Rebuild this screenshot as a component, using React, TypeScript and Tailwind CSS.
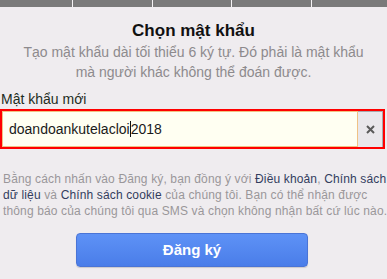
import React from "react";

export default function App() {
  const segs = [72, 79, 79, 79, 75];
  return (
    <div
      className="w-[387px] h-[279px] overflow-hidden bg-[#efecef] flex flex-col"
      style={{ fontFamily: '"Liberation Sans", Arial, sans-serif' }}
    >
      <div className="flex gap-px h-[7px] bg-[#f4f2f4]">
        {segs.map((w, i) => (
          <div key={i} className="h-full bg-[#7a7a7a]" style={{ width: w }} />
        ))}
      </div>
      <h1 className="mt-[14px] text-center text-[17px] leading-[20px] font-bold text-[#111]">
        Chọn mật khẩu
      </h1>
      <p className="mt-[1px] text-center text-[14px] leading-[20px] text-[#8d8a8d] px-[20px]">
        Tạo mật khẩu dài tối thiểu 6 ký tự. Đó phải là mật khẩu
        <br />
        mà người khác không thể đoán được.
      </p>
      <div className="mt-[9px] pl-[1px] text-[14px] leading-[16px] text-[#1e2d1e]">
        Mật khẩu mới
      </div>
      <div className="mt-[2px] w-[385px] h-[40px] border-2 border-[#ff0000] flex">
        <div className="flex-1 flex items-center bg-[#fffff2] border border-[#f0c284] pl-[6px] text-[14px] text-[#1a1a1a]">
          <span>doandoankutelacloi</span>
          <span className="inline-block w-px h-[16px] bg-[#111]" />
          <span>2018</span>
        </div>
        <div className="w-[25px] flex items-center justify-center bg-[#e9e7eb] border-t border-r border-[#a9a9ad]">
          <svg width="9" height="9" viewBox="0 0 9 9">
            <path d="M1 1 L8 8 M8 1 L1 8" stroke="#5a5a5a" strokeWidth="2" />
          </svg>
        </div>
      </div>
      <p className="mt-[22px] pl-[3px] text-[12px] leading-[16px] tracking-[0.14px] text-[#9a979a] whitespace-nowrap">
        Bằng cách nhấn vào Đăng ký, bạn đồng ý với{" "}
        <span className="text-[#333d5e]">Điều khoản</span>,{" "}
        <span className="text-[#333d5e]">Chính sách</span>
        <br />
        <span className="text-[#333d5e]">dữ liệu</span> và{" "}
        <span className="text-[#333d5e]">Chính sách cookie</span> của chúng tôi. Bạn có thể nhận được
        <br />
        thông báo của chúng tôi qua SMS và chọn không nhận bất cứ lúc nào.
      </p>
      <div className="mt-[14px] flex pl-[76px]">
        <button className="w-[232px] h-[34px] rounded-[4px] border border-[#4a74d6] bg-gradient-to-b from-[#5e92f6] to-[#4a7de9] text-white font-bold text-[15px] shadow-[0_1px_1px_rgba(0,0,0,0.15)]">
          Đăng ký
        </button>
      </div>
    </div>
  );
}
